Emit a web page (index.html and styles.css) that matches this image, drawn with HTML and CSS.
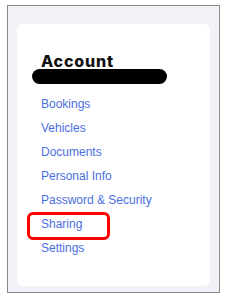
FILE: index.html
```html
<!DOCTYPE html>
<html lang="en">
<head>
  <meta charset="UTF-8" />
  <title>Account</title>
  <link rel="stylesheet" href="styles.css">
</head>
<body>
  <div class="frame">
    <div class="card">
      <h2 class="title">Account</h2>
      <div class="redacted"></div>
      <ul class="menu">
        <li><a href="#">Bookings</a></li>
        <li><a href="#">Vehicles</a></li>
        <li><a href="#">Documents</a></li>
        <li><a href="#">Personal Info</a></li>
        <li><a href="#">Password &amp; Security</a></li>
        <li class="marked"><a href="#">Sharing</a></li>
        <li><a href="#">Settings</a></li>
      </ul>
    </div>
  </div>
</body>
</html>
```

FILE: styles.css
```css
body {
  margin: 0;
  background: #fff;
  font-family: "Liberation Sans", Arial, sans-serif;
}

.frame {
  margin: 5px 0 0 7px;
  width: 213px;
  height: 288px;
  box-sizing: border-box;
  border: 1px solid #8a8a8a;
  background: #f1f1f7;
  padding: 18px 9px 6px 9px;
}

.card {
  background: #fff;
  border-radius: 6px;
  height: 100%;
  box-sizing: border-box;
  padding: 27px 24px 0 24px;
}

.title {
  margin: 0;
  font-family: Inter, "Noto Sans", sans-serif;
  font-weight: 800;
  font-size: 16px;
  letter-spacing: 0.8px;
  line-height: 20px;
  color: #111;
}

.redacted {
  margin: -2px 0 0 -9px;
  width: 135px;
  height: 15px;
  border-radius: 8px;
  background: #000;
}

.menu {
  list-style: none;
  margin: 8px 0 0 0;
  padding: 0;
}

.menu li {
  font-size: 12px;
  line-height: 24px;
  position: relative;
}

.menu a {
  color: #4a6fe0;
  text-decoration: none;
}

.marked::after {
  content: "";
  position: absolute;
  left: -14px;
  top: 0;
  width: 83px;
  height: 28px;
  box-sizing: border-box;
  border: 3px solid #f00;
  border-radius: 6px;
}
```
